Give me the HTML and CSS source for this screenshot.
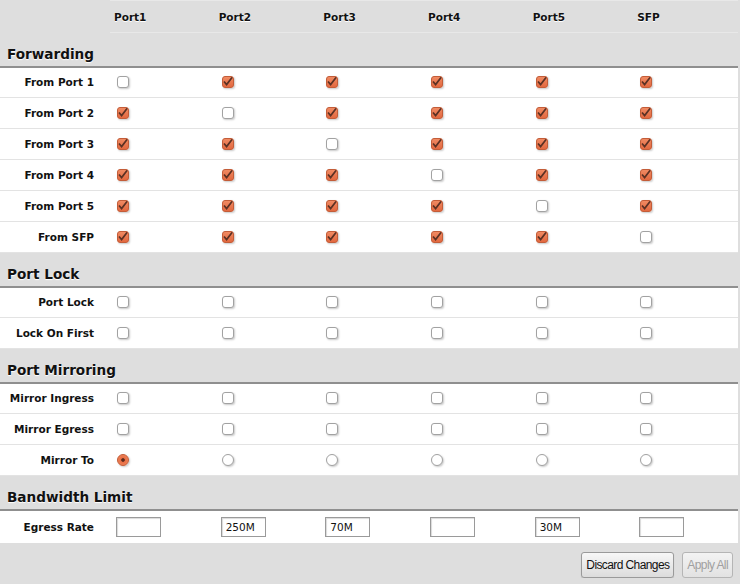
FILE: index.html
```html
<!DOCTYPE html>
<html lang="en">
<head>
	<meta charset="UTF-8">
	<title>Switch</title>
	<link rel="stylesheet" href="styles.css">
</head>
<body>
	<table class="switch">
		<colgroup>
			<col class="c-label">
			<col><col><col><col><col><col>
		</colgroup>
		<tr class="head">
			<th></th>
			<th>Port1</th><th>Port2</th><th>Port3</th><th>Port4</th><th>Port5</th><th>SFP</th>
		</tr>

		<!-- forwarding -->
		<tr class="title"><td colspan="7">Forwarding</td></tr>
		<tr class="light">
			<th>From Port 1</th>
			<td><input type="checkbox" class="cb"></td>
			<td><input type="checkbox" class="cb" checked></td>
			<td><input type="checkbox" class="cb" checked></td>
			<td><input type="checkbox" class="cb" checked></td>
			<td><input type="checkbox" class="cb" checked></td>
			<td><input type="checkbox" class="cb" checked></td>
		</tr>
		<tr>
			<th>From Port 2</th>
			<td><input type="checkbox" class="cb" checked></td>
			<td><input type="checkbox" class="cb"></td>
			<td><input type="checkbox" class="cb" checked></td>
			<td><input type="checkbox" class="cb" checked></td>
			<td><input type="checkbox" class="cb" checked></td>
			<td><input type="checkbox" class="cb" checked></td>
		</tr>
		<tr class="light">
			<th>From Port 3</th>
			<td><input type="checkbox" class="cb" checked></td>
			<td><input type="checkbox" class="cb" checked></td>
			<td><input type="checkbox" class="cb"></td>
			<td><input type="checkbox" class="cb" checked></td>
			<td><input type="checkbox" class="cb" checked></td>
			<td><input type="checkbox" class="cb" checked></td>
		</tr>
		<tr>
			<th>From Port 4</th>
			<td><input type="checkbox" class="cb" checked></td>
			<td><input type="checkbox" class="cb" checked></td>
			<td><input type="checkbox" class="cb" checked></td>
			<td><input type="checkbox" class="cb"></td>
			<td><input type="checkbox" class="cb" checked></td>
			<td><input type="checkbox" class="cb" checked></td>
		</tr>
		<tr class="light">
			<th>From Port 5</th>
			<td><input type="checkbox" class="cb" checked></td>
			<td><input type="checkbox" class="cb" checked></td>
			<td><input type="checkbox" class="cb" checked></td>
			<td><input type="checkbox" class="cb" checked></td>
			<td><input type="checkbox" class="cb"></td>
			<td><input type="checkbox" class="cb" checked></td>
		</tr>
		<tr>
			<th>From SFP</th>
			<td><input type="checkbox" class="cb" checked></td>
			<td><input type="checkbox" class="cb" checked></td>
			<td><input type="checkbox" class="cb" checked></td>
			<td><input type="checkbox" class="cb" checked></td>
			<td><input type="checkbox" class="cb" checked></td>
			<td><input type="checkbox" class="cb"></td>
		</tr>

		<!-- port lock -->
		<tr class="title"><td colspan="7">Port Lock</td></tr>
		<tr>
			<th>Port Lock</th>
			<td><input type="checkbox" class="cb"></td>
			<td><input type="checkbox" class="cb"></td>
			<td><input type="checkbox" class="cb"></td>
			<td><input type="checkbox" class="cb"></td>
			<td><input type="checkbox" class="cb"></td>
			<td><input type="checkbox" class="cb"></td>
		</tr>
		<tr class="light">
			<th>Lock On First</th>
			<td><input type="checkbox" class="cb"></td>
			<td><input type="checkbox" class="cb"></td>
			<td><input type="checkbox" class="cb"></td>
			<td><input type="checkbox" class="cb"></td>
			<td><input type="checkbox" class="cb"></td>
			<td><input type="checkbox" class="cb"></td>
		</tr>

		<!-- mirroring -->
		<tr class="title"><td colspan="7">Port Mirroring</td></tr>
		<tr class="light">
			<th>Mirror Ingress</th>
			<td><input type="checkbox" class="cb"></td>
			<td><input type="checkbox" class="cb"></td>
			<td><input type="checkbox" class="cb"></td>
			<td><input type="checkbox" class="cb"></td>
			<td><input type="checkbox" class="cb"></td>
			<td><input type="checkbox" class="cb"></td>
		</tr>
		<tr>
			<th>Mirror Egress</th>
			<td><input type="checkbox" class="cb"></td>
			<td><input type="checkbox" class="cb"></td>
			<td><input type="checkbox" class="cb"></td>
			<td><input type="checkbox" class="cb"></td>
			<td><input type="checkbox" class="cb"></td>
			<td><input type="checkbox" class="cb"></td>
		</tr>
		<tr class="light">
			<th>Mirror To</th>
			<td><input type="radio" name="mirror" class="rb" checked></td>
			<td><input type="radio" name="mirror" class="rb"></td>
			<td><input type="radio" name="mirror" class="rb"></td>
			<td><input type="radio" name="mirror" class="rb"></td>
			<td><input type="radio" name="mirror" class="rb"></td>
			<td><input type="radio" name="mirror" class="rb"></td>
		</tr>

		<!-- bandwidth -->
		<tr class="title"><td colspan="7">Bandwidth Limit</td></tr>
		<tr class="light rate">
			<th>Egress Rate</th>
			<td><input type="text" class="txt" value=""></td>
			<td><input type="text" class="txt" value="250M"></td>
			<td><input type="text" class="txt" value="70M"></td>
			<td><input type="text" class="txt" value=""></td>
			<td><input type="text" class="txt" value="30M"></td>
			<td><input type="text" class="txt" value=""></td>
		</tr>
	</table>

	<div class="actions">
		<button class="btn">Discard Changes</button>
		<button class="btn" disabled>Apply All</button>
	</div>
</body>
</html>
```

FILE: styles.css
```css
*{box-sizing: border-box;}
body{margin: 0;background: #dedede;font-family: "DejaVu Sans", Verdana, sans-serif;color: #111;}

.switch{width: 738px;border-collapse: collapse;table-layout: fixed;}
.switch .c-label{width: 110px;}
.switch td,.switch th{padding: 0;}

.head th{height: 32px;font-size: 10.5px;font-weight: bold;text-align: left;padding-left: 4px;text-shadow: 0 1px 0 #fff;}
.head th + th{border-top: 1px solid #e8e8e8;border-bottom: 1px solid #e8e8e8;}

.title td{height: 34px;padding: 0 0 4px 7px;vertical-align: bottom;font-size: 13.6px;font-weight: bold;text-shadow: 0 1px 1px #fff;border-bottom: 2px solid #8f8f8f;}

.switch tr:not(.head):not(.title){background: #fff;}
.switch tr.light{background: #f6f6f6;}
.switch tr:not(.head):not(.title) th,
.switch tr:not(.head):not(.title) td{height: 31px;border-bottom: 1px solid #e3e3e3;}
.switch tr:not(.head):not(.title) th{text-align: right;padding-right: 16px;font-size: 10.5px;font-weight: bold;}
.switch tr.light.rate th,.switch tr.light.rate td{height: 33px;padding-top: 1px;border-bottom: 0;}

.cb,.rb{-webkit-appearance: none;appearance: none;display: block;width: 12px;height: 12px;margin: 0 0 0 7px;border: 1px solid #a2a2a2;background: #fff;box-shadow: 1px 1px 2px rgba(0,0,0,0.22);}
.cb{border-radius: 3px;}
.cb:checked{border-color: #c35d39;background: url("data:image/svg+xml,%3Csvg xmlns='http://www.w3.org/2000/svg' width='12' height='12' viewBox='0 0 12 12'%3E%3Cpath d='M2 5.5 L4.6 8.6 L10.6 0.8' fill='none' stroke='%235b3124' stroke-width='1.7'/%3E%3C/svg%3E") no-repeat -1px -1px, linear-gradient(#f08a62, #e2683f);}
.rb{border-radius: 50%;}
.rb:checked{border-color: #c35d39;background: radial-gradient(circle, #5b2a1c 0, #5b2a1c 1.4px, #e96f45 2.2px, #ef8a60 100%);}

.txt{display: block;width: 45px;height: 20px;margin-left: 6px;border: 1px solid #9a9a9a;box-shadow: inset 1px 1px 1px rgba(0,0,0,0.15);padding: 0 0 0 4px;font-family: "DejaVu Sans", sans-serif;font-size: 10.5px;color: #111;background: #fff;}

.actions{display: flex;justify-content: flex-end;gap: 8px;padding: 9px 7px 0 0;}
.btn{height: 26px;padding: 0 4px;border: 1px solid #9a9a9a;border-radius: 3px;background: linear-gradient(#f7f7f7, #dcdcdc);box-shadow: 0 1px 1px rgba(0,0,0,0.15);font-family: "Liberation Sans", Arial, sans-serif;font-size: 12px;letter-spacing: -0.6px;color: #111;}
.btn:disabled{color: #a0a0a0;border-color: #b5b5b5;background: linear-gradient(#f3f3f3, #e2e2e2);box-shadow: none;}
```
